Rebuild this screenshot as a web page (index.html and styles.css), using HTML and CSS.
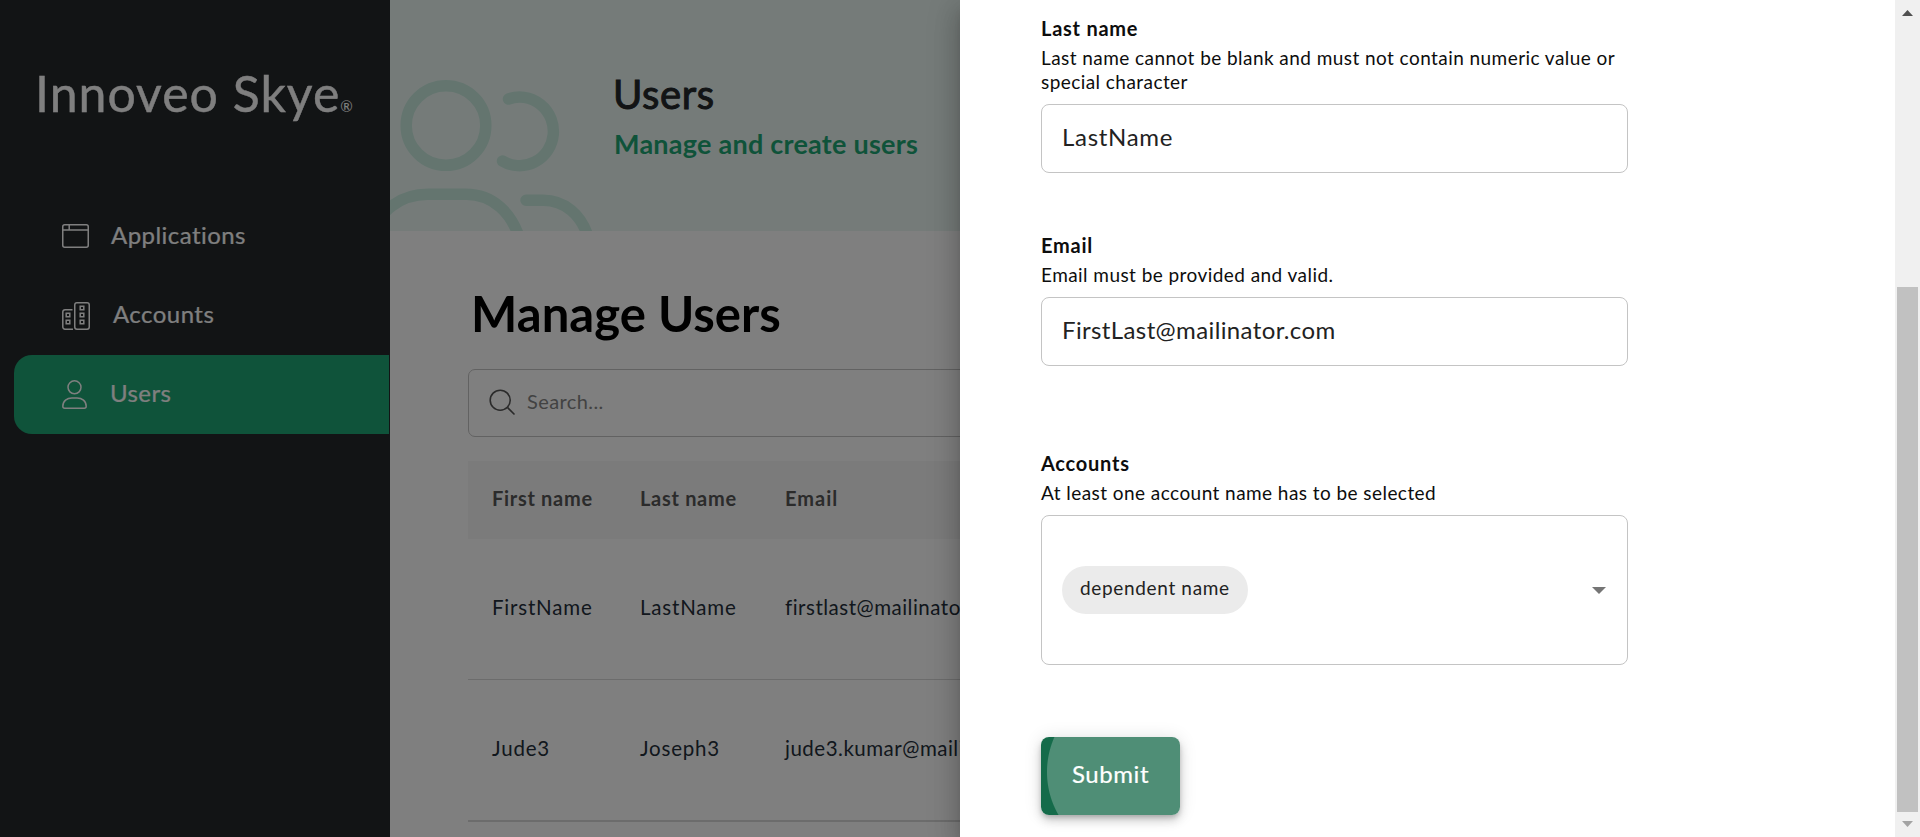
FILE: index.html
```html
<!DOCTYPE html>
<html lang="en">
<head>
<meta charset="utf-8">
<title>Innoveo Skye - Users</title>
<link rel="stylesheet" href="styles.css">
</head>
<body>
<div class="app">
  <aside class="sidebar">
    <div class="brand"><span class="brand-name">Innoveo Skye</span><span class="brand-mark">®</span></div>
    <nav class="nav">
      <a class="nav-item">
        <svg class="nav-icon" width="28" height="28" viewBox="0 0 28 28"><rect x=".75" y="1.75" width="25.5" height="22.5" rx="2"/><path d="M.75 7H26M7.2 2v5"/></svg>
        <span class="nav-label label-apps">Applications</span>
      </a>
      <a class="nav-item">
        <svg class="nav-icon" width="28" height="28" viewBox="0 0 28 28"><rect x="12.75" y=".75" width="14.5" height="26.5" rx="2.2"/><path d="M10.5 7.75H3a2.2 2.2 0 0 0-2.2 2.2v15a2.2 2.2 0 0 0 2.2 2.3h8"/><path d="M18.2 4.2h3.6v3.6h-3.6zM18.2 11.2h3.6v3.6h-3.6zM18.2 18.2h3.6v3.6h-3.6zM4.2 11.2h3.6v3.6H4.2zM4.2 18.2h3.6v3.6H4.2z"/></svg>
        <span class="nav-label label-accounts">Accounts</span>
      </a>
      <a class="nav-item nav-item-active">
        <svg class="nav-icon" width="26" height="29" viewBox="0 0 26 29"><circle cx="12.5" cy="7.3" r="6.5"/><path d="M.8 26.2C.8 21 5 17.9 10 17.9h5c5 0 9.2 3.1 9.2 8.3q0 2-2 2H2.8q-2 0-2-2z"/></svg>
        <span class="nav-label label-users">Users</span>
      </a>
    </nav>
  </aside>
  <main class="main">
    <header class="banner">
      <svg class="banner-art" width="225" height="231" viewBox="0 0 225 231">
        <circle cx="56" cy="125.5" r="39.8"/>
        <path d="M118.5 99A33.8 34.3 0 1 1 112.5 161"/>
        <path d="M-20 240C-12 211 10 194.300 38 194.300H76C103 194.300 122 213 130 240"/>
        <path d="M136 200.300H153C174 200.300 192 214 199 240"/>
      </svg>
      <div class="banner-copy">
        <div class="banner-title">Users</div>
        <div class="banner-subtitle">Manage and create users</div>
      </div>
    </header>
    <section class="content">
      <h1 class="heading">Manage Users</h1>
      <div class="search">
        <svg class="search-icon" width="27" height="27" viewBox="0 0 27 27"><circle cx="11.2" cy="11.2" r="10"/><path d="M18.4 18.4L25.500 25.500"/></svg>
        <span class="search-text">Search...</span>
      </div>
      <div class="table">
        <div class="row row-head"><span>First name</span><span>Last name</span><span class="cell-email-head">Email</span></div>
        <div class="row"><span>FirstName</span><span>LastName</span><span class="cell-email">firstlast@mailinator.com</span></div>
        <div class="row row-last"><span>Jude3</span><span>Joseph3</span><span class="cell-email">jude3.kumar@mailinator.com</span></div>
      </div>
    </section>
  </main>
</div>
<div class="backdrop"></div>
<div class="drawer">
  <form class="form">
    <div class="field">
      <div class="field-label">Last name</div>
      <div class="field-help">Last name cannot be blank and must not contain numeric value or<br>special character</div>
      <div class="field-box"><span class="value-name">LastName</span></div>
    </div>
    <div class="field">
      <div class="field-label">Email</div>
      <div class="field-help">Email must be provided and valid.</div>
      <div class="field-box"><span class="value-email">FirstLast@mailinator.com</span></div>
    </div>
    <div class="field field-accounts">
      <div class="field-label">Accounts</div>
      <div class="field-help">At least one account name has to be selected</div>
      <div class="field-box select-box">
        <span class="chip">dependent name</span>
        <svg class="caret" width="14" height="7" viewBox="0 0 14 7"><path d="M0 0h14L7 7z"/></svg>
      </div>
    </div>
    <div class="submit"><span class="submit-label">Submit</span></div>
  </form>
  <div class="scrollbar">
    <svg class="arrow-up" width="11" height="6" viewBox="0 0 11 6"><path d="M5.5 0L11 6H0z"/></svg>
    <div class="thumb"></div>
    <svg class="arrow-down" width="11" height="6" viewBox="0 0 11 6"><path d="M5.5 6L11 0H0z"/></svg>
  </div>
</div>
</body>
</html>
```
FILE: styles.css
```css
* { box-sizing: border-box; }
body {
  margin: 0;
  height: 837px;
  overflow: hidden;
  background: #fff;
  font-family: Lato, "Open Sans", sans-serif;
}
.app { display: flex; height: 837px; }

/* Sidebar */
.sidebar { width: 390px; flex: none; background: #24282b; color: #fff; }
.brand {
  display: flex;
  align-items: flex-start;
  height: 197px;
  padding: 63px 0 0 35px;
  line-height: 60px;
}
.brand-name { font-size: 50px; letter-spacing: 1px; -webkit-text-stroke: .4px #fff; }
.brand-mark { font-size: 15px; line-height: 16px; margin-top: 35px; }
.nav-item {
  display: flex;
  align-items: center;
  height: 79px;
  margin: 0 1px 0 14px;
  padding-left: 48px;
}
.nav-item-active { background: #1fa674; border-radius: 18px 0 0 18px; }
.nav-icon { flex: none; fill: none; stroke: #fff; stroke-width: 1.5; }
.nav-label { font-size: 24px; letter-spacing: .45px; padding-bottom: 4px; -webkit-text-stroke: .2px #fff; }
.label-apps { margin-left: 21px; }
.label-accounts { margin-left: 23px; }
.label-users { margin-left: 22px; }

/* Banner */
.main { flex: 1; min-width: 0; }
.banner { display: flex; height: 231px; background: #ebf7f3; }
.banner-art {
  flex: none;
  fill: none;
  stroke: #c8ebdf;
  stroke-width: 11.5;
  stroke-linecap: round;
}
.banner-copy { padding-top: 70px; }
.banner-title {
  margin: 0 0 9px -2px;
  font-size: 40px;
  line-height: 48px;
  letter-spacing: .6px;
  color: #24282b;
  -webkit-text-stroke: 1px #24282b;
}
.banner-subtitle { font-size: 27px; line-height: 34px; font-weight: 700; letter-spacing: .24px; color: #1fa674; margin-left: -1px; }

/* Content */
.content { padding: 52px 0 0 78px; }
.heading { margin: 0 0 26px 3px; font-size: 49px; line-height: 60px; font-weight: 700; letter-spacing: .05px; color: #000; }
.search {
  display: flex;
  align-items: center;
  height: 68px;
  padding-left: 20px;
  border: 1px solid #c4c4c4;
  border-radius: 7px;
}
.search-icon { fill: none; stroke: #555; stroke-width: 1.6; margin-bottom: 2px; }
.search-text { margin-left: 11px; padding-bottom: 4px; font-size: 20px; letter-spacing: .4px; color: #858585; }
.table { margin-top: 24px; color: #242f3a; font-size: 20.5px; letter-spacing: .8px; }
.row {
  display: grid;
  grid-template-columns: 148px 145px 1fr;
  align-items: center;
  height: 141px;
  padding: 0 0 4px 24px;
  border-bottom: 1px solid #d8d8d8;
}
.row-head { height: 78px; border: 0; background: #f6f6f6; color: #575757; font-size: 20px; font-weight: 700; letter-spacing: .7px; }
.row-last { height: 142px; border-bottom-width: 2px; }
.cell-email { letter-spacing: .5px; }
.cell-email-head { letter-spacing: 1px; }

/* Drawer */
.backdrop { position: absolute; inset: 0; background: rgba(0, 0, 0, .5); }
.drawer {
  position: absolute;
  top: 0;
  right: 0;
  bottom: 0;
  width: 960px;
  display: flex;
  background: #fff;
  box-shadow: 0 8px 10px -5px rgba(0, 0, 0, .2), 0 16px 24px 2px rgba(0, 0, 0, .14), 0 6px 30px 5px rgba(0, 0, 0, .12);
}
.form { flex: 1; padding: 16px 0 0 81px; color: #0d0d0d; }
.field { width: 587px; }
.field + .field { margin-top: 60px; }
.field + .field-accounts { margin: 85px 0 72px; }
.field-label { font-size: 20px; line-height: 24px; font-weight: 700; letter-spacing: .75px; margin-bottom: 6px; }
.field-help { font-size: 19px; line-height: 24px; letter-spacing: .44px; margin-bottom: 10px; white-space: nowrap; }
.field-box {
  display: flex;
  align-items: center;
  height: 69px;
  padding: 0 20px 4px;
  border: 1px solid #c4c4c4;
  border-radius: 8px;
  font-size: 24px;
  color: #222;
}
.value-name { letter-spacing: .7px; }
.value-email { letter-spacing: .38px; }
.select-box { height: 150px; justify-content: space-between; padding: 0 21px 0 20px; }
.chip {
  height: 48px;
  padding: 0 18px;
  border-radius: 24px;
  background: #ebebeb;
  font-size: 19px;
  line-height: 44px;
  letter-spacing: .66px;
}
.caret { fill: #757575; }
.submit {
  display: flex;
  align-items: center;
  justify-content: center;
  width: 139px;
  height: 78px;
  padding-bottom: 5px;
  border-radius: 8px;
  color: #fff;
  background: radial-gradient(circle at 92px 35px, #4f8e76 85.5px, #156b4a 86.5px);
  box-shadow: 0 3px 5px -1px rgba(0, 0, 0, .2), 0 6px 10px rgba(0, 0, 0, .14), 0 1px 18px rgba(0, 0, 0, .12);
}
.submit-label { font-size: 24px; letter-spacing: .58px; -webkit-text-stroke: .2px #fff; }

/* Scrollbar */
.scrollbar { display: flex; flex-direction: column; align-items: center; width: 25px; background: #f0f0f0; }
.arrow-up { margin-top: 10px; fill: #505050; }
.thumb { width: 21px; height: 525px; margin-top: 271px; background: #c1c1c1; }
.arrow-down { margin-top: 9px; fill: #a3a3a3; }
```
